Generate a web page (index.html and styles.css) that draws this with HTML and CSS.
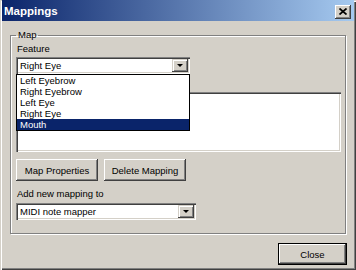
FILE: index.html
```html
<!DOCTYPE html>
<html lang="en">
<head>
    <meta charset="UTF-8">
    <meta name="viewport" content="width=device-width, initial-scale=1.0">
    <title>Mappings</title>
    <link rel="stylesheet" href="styles.css">
</head>
<body>
    <div class="window">
        <div class="titlebar">
            <span class="title">Mappings</span>
            <span class="caption-btn">
                <svg width="8" height="7" viewBox="0 0 8 7">
                    <path d="M0.5 0.5L7.5 6.5M7.5 0.5L0.5 6.5" stroke="#000" stroke-width="1.7" fill="none"/>
                </svg>
            </span>
        </div>

        <div class="content">
            <fieldset class="group">
                <legend>Map</legend>

                <div class="label">Feature</div>
                <div class="combo feature-combo">
                    <span class="combo-text">Right Eye</span>
                    <span class="combo-btn"><span class="arrow"></span></span>
                    <ul class="dropdown">
                        <li>Left Eyebrow</li>
                        <li>Right Eyebrow</li>
                        <li>Left Eye</li>
                        <li>Right Eye</li>
                        <li class="selected">Mouth</li>
                    </ul>
                </div>

                <div class="listbox"></div>

                <div class="buttons">
                    <button class="btn">Map Properties</button>
                    <button class="btn">Delete Mapping</button>
                </div>

                <div class="label label-add">Add new mapping to</div>
                <div class="combo midi-combo">
                    <span class="combo-text">MIDI note mapper</span>
                    <span class="combo-btn"><span class="arrow"></span></span>
                </div>
            </fieldset>

            <div class="footer">
                <button class="btn btn-default">Close</button>
            </div>
        </div>
    </div>
</body>
</html>
```

FILE: styles.css
```css
:root {
    --face: #d4d0c8;
    --light: #ffffff;
    --shadow: #808080;
    --dark: #404040;
    --select: #0a246a;
}

* {
    box-sizing: border-box;
}

body {
    margin: 0;
    font-family: "Liberation Sans", Arial, sans-serif;
    font-size: 9.5px;
    color: #000;
    background: var(--face);
}

.window {
    width: 356px;
    height: 270px;
    padding: 0 2px 2px;
    background: var(--face);
    box-shadow: inset 1px 1px 0 var(--face), inset 2px 2px 0 var(--light),
        inset -1px -1px 0 var(--dark), inset -2px -2px 0 var(--shadow);
    display: flex;
    flex-direction: column;
}

/* title bar */
.titlebar {
    height: 21px;
    padding: 0 3px 0 2px;
    background: linear-gradient(to right, #0a246a, #a6caf0);
    display: flex;
    align-items: center;
    justify-content: space-between;
}

.title {
    color: #fff;
    font-weight: bold;
    font-size: 11.5px;
}

.caption-btn {
    width: 16px;
    height: 14px;
    background: var(--face);
    box-shadow: inset -1px -1px 0 var(--dark), inset 1px 1px 0 var(--light),
        inset -2px -2px 0 var(--shadow);
    display: flex;
    align-items: center;
    justify-content: center;
    margin-top: 2px;
}

.caption-btn svg {
    display: block;
}

.content {
    flex: 1;
    padding: 8px 8px 0;
    display: flex;
    flex-direction: column;
}

/* group box */
.group {
    margin: 0;
    padding: 2px 5px 13px;
    min-width: 0;
    border: 1px solid var(--shadow);
    box-shadow: inset 1px 1px 0 var(--light), 1px 1px 0 var(--light);
}

.group legend {
    padding: 0 2px;
    line-height: 12px;
}

.label {
    line-height: 12px;
    padding-left: 1px;
}

/* combo boxes */
.combo {
    position: relative;
    height: 17px;
    margin-top: 2px;
    padding: 2px;
    background: #fff;
    box-shadow: inset 1px 1px 0 var(--shadow), inset 2px 2px 0 var(--dark),
        inset -1px -1px 0 var(--light), inset -2px -2px 0 var(--face);
    display: flex;
    align-items: center;
}

.feature-combo {
    width: 174px;
}

.midi-combo {
    width: 180px;
    margin-top: 3px;
}

.combo-text {
    flex: 1;
    padding-left: 2px;
}

.combo-btn {
    width: 16px;
    height: 13px;
    background: var(--face);
    box-shadow: inset -1px -1px 0 var(--dark), inset 1px 1px 0 var(--face),
        inset 2px 2px 0 var(--light), inset -2px -2px 0 var(--shadow);
    display: flex;
    align-items: center;
    justify-content: center;
}

.arrow {
    width: 0;
    height: 0;
    border-left: 3px solid transparent;
    border-right: 3px solid transparent;
    border-top: 3px solid #000;
}

.dropdown {
    position: absolute;
    left: 0;
    top: 100%;
    width: 174px;
    margin: 0;
    padding: 0;
    list-style: none;
    background: #fff;
    border: 1px solid #000;
    z-index: 2;
}

.dropdown li {
    height: 11px;
    line-height: 11px;
    padding-left: 3px;
}

.dropdown li.selected {
    background: var(--select);
    color: #fff;
}

.listbox {
    width: 325px;
    height: 60px;
    margin-top: 18px;
    background: #fff;
    box-shadow: inset 1px 1px 0 var(--shadow), inset 2px 2px 0 var(--dark),
        inset -1px -1px 0 var(--light), inset -2px -2px 0 var(--face);
}

/* buttons */
.buttons {
    display: flex;
    gap: 6px;
    margin-top: 7px;
}

.btn {
    width: 82px;
    height: 22px;
    padding: 0;
    border: none;
    background: var(--face);
    font-family: inherit;
    font-size: inherit;
    color: #000;
    box-shadow: inset -1px -1px 0 var(--dark), inset 1px 1px 0 var(--light),
        inset -2px -2px 0 var(--shadow);
}

.label-add {
    margin-top: 7px;
}

.footer {
    margin-top: 9px;
    display: flex;
    justify-content: flex-end;
    margin-right: -1px;
}

.btn-default {
    width: 69px;
    border: 1px solid #000;
    box-shadow: inset -1px -1px 0 var(--dark), inset 1px 1px 0 var(--light),
        inset -2px -2px 0 var(--shadow);
}
```
